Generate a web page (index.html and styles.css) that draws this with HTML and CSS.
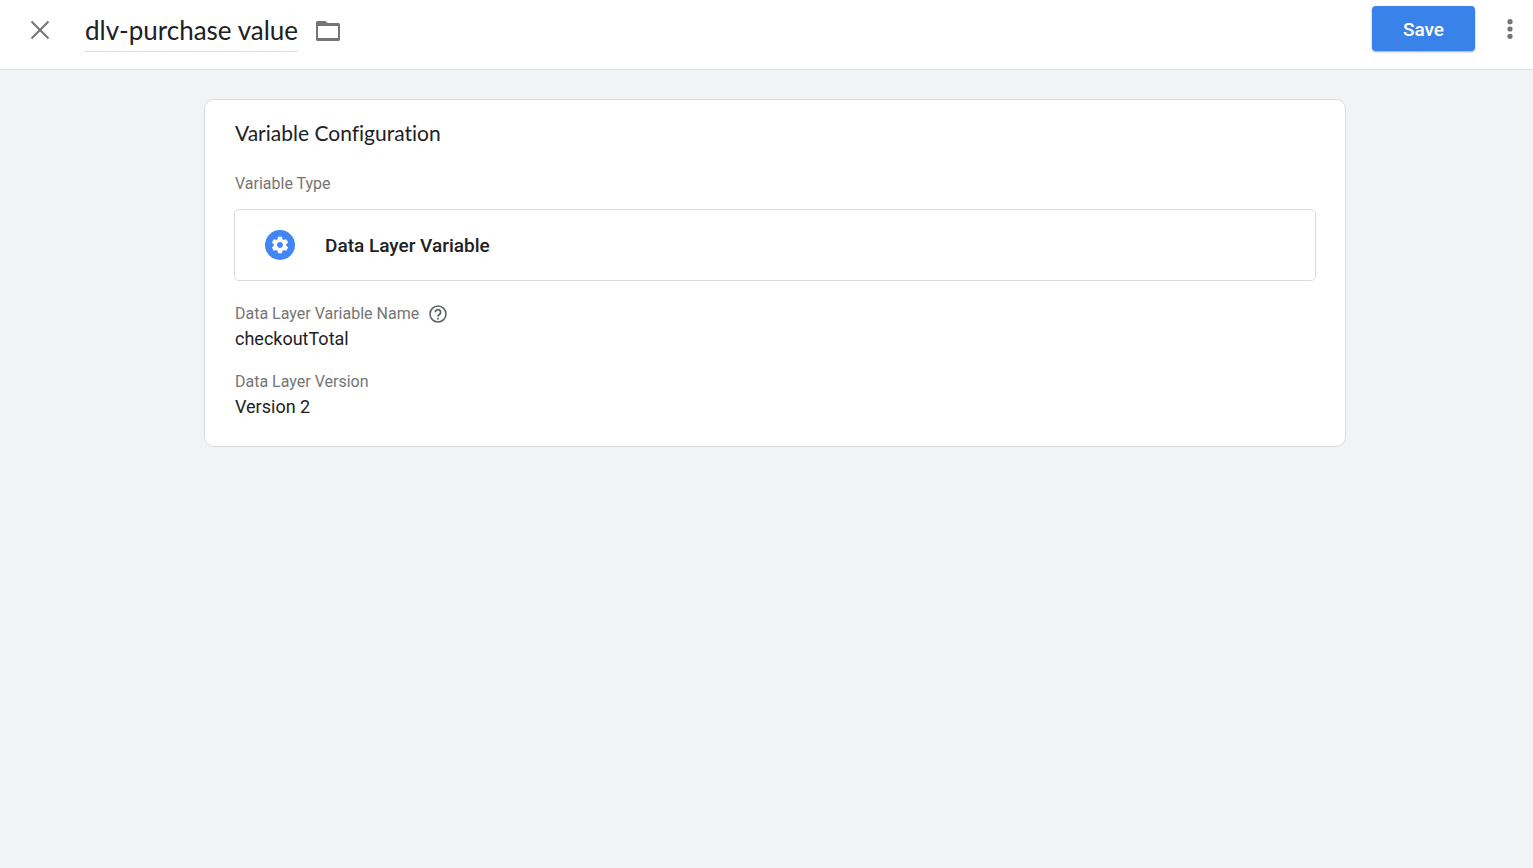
FILE: index.html
```
<!DOCTYPE html>
<html lang="en">
<head>
    <meta charset="UTF-8">
    <title>dlv-purchase value</title>
    <meta name="viewport" content="width=device-width, initial-scale=1.0">
    <link rel="stylesheet" href="styles.css">
</head>
<body>
    <header class="toolbar">
        <button class="icon-btn" type="button" aria-label="Close">
            <svg width="20" height="20" viewBox="0 0 20 20"><path d="M1.5 1.5l17 17M18.5 1.5l-17 17" fill="none" stroke="#757575" stroke-width="2"/></svg>
        </button>
        <input class="variable-name" type="text" value="dlv-purchase value" aria-label="Variable name">
        <button class="icon-btn" type="button" aria-label="Move to folder">
            <svg width="24" height="22" viewBox="0 0 24 22"><path d="M1.500 2H9.500l2.200 2H22.500a1.500 1.500 0 0 1 1.500 1.500v15a1.500 1.500 0 0 1-1.500 1.500H1.500a1.500 1.500 0 0 1-1.500-1.500v-17A1.500 1.500 0 0 1 1.500 2zM2 7v12h20V7z" fill="#757575" fill-rule="evenodd"/></svg>
        </button>
        <div class="toolbar-actions">
            <button class="save-btn" type="button">Save</button>
            <button class="icon-btn" type="button" aria-label="More actions">
                <svg width="6" height="22" viewBox="0 0 6 22" fill="#757575"><circle cx="3" cy="2.700" r="2.600"/><circle cx="3" cy="10" r="2.600"/><circle cx="3" cy="17.300" r="2.600"/></svg>
            </button>
        </div>
    </header>

    <main class="content">
        <section class="card">
            <h1 class="card-title">Variable Configuration</h1>
            <p class="label">Variable Type</p>
            <button class="type-box" type="button">
                <svg width="30" height="30" viewBox="0 0 30 30">
                    <circle cx="15" cy="15" r="15" fill="#4285f4"/>
                    <path transform="translate(5 5) scale(.8333)" d="M19.43 12.98c.04-.32.07-.64.07-.98s-.03-.66-.07-.98l2.11-1.65c.19-.15.24-.42.12-.64l-2-3.46c-.12-.22-.39-.3-.61-.22l-2.49 1c-.52-.4-1.08-.73-1.69-.98l-.38-2.65C14.46 2.18 14.25 2 14 2h-4c-.25 0-.46.18-.49.42l-.38 2.65c-.61.25-1.17.59-1.69.98l-2.49-1c-.23-.09-.49 0-.61.22l-2 3.46c-.13.22-.07.49.12.64l2.11 1.65c-.04.32-.07.65-.07.98s.03.66.07.98l-2.11 1.65c-.19.15-.24.42-.12.64l2 3.46c.12.22.39.3.61.22l2.49-1c.52.4 1.08.73 1.69.98l.38 2.65c.03.24.24.42.49.42h4c.25 0 .46-.18.49-.42l.38-2.65c.61-.25 1.17-.59 1.69-.98l2.49 1c.23.09.49 0 .61-.22l2-3.46c.12-.22.07-.49-.12-.64l-2.11-1.65zM12 15.5c-1.93 0-3.5-1.57-3.5-3.5s1.57-3.5 3.5-3.5 3.5 1.57 3.5 3.5-1.57 3.5-3.5 3.5z" fill="#fff"/>
                </svg>
                <span>Data Layer Variable</span>
            </button>
            <dl class="fields">
                <div class="field">
                    <dt class="label">
                        Data Layer Variable Name
                        <button class="icon-btn" type="button" aria-label="Help">
                            <svg width="18" height="18" viewBox="0 0 18 18"><circle cx="9" cy="9" r="8" fill="none" stroke="#5f6368" stroke-width="1.6"/><path d="M6.4 7.3a2.6 2.6 0 1 1 4.3 1.9C9.7 10 9 10.3 9 11.6" fill="none" stroke="#5f6368" stroke-width="1.8"/><path d="M8.1 12.7h1.8v1.8H8.1z" fill="#5f6368"/></svg>
                        </button>
                    </dt>
                    <dd class="value">checkoutTotal</dd>
                </div>
                <div class="field">
                    <dt class="label">Data Layer Version</dt>
                    <dd class="value">Version 2</dd>
                </div>
            </dl>
        </section>
    </main>
</body>
</html>
```
FILE: styles.css
```
* {
    margin: 0;
    padding: 0;
    box-sizing: border-box;
}

body {
    min-height: 100vh;
    background: #f1f3f4;
    color: #202124;
    font-family: Roboto, Arial, sans-serif;
}

button {
    border: 0;
    background: none;
    font-family: inherit;
    cursor: pointer;
}

svg {
    display: block;
}

.toolbar {
    display: flex;
    align-items: flex-start;
    height: 70px;
    padding: 6px 20px 0 30px;
    background: #fff;
    border-bottom: 1px solid #dadce0;
}

.toolbar .icon-btn {
    display: flex;
    align-items: center;
    height: 48px;
}

.variable-name {
    width: 213px;
    height: 46px;
    margin: 0 18px 0 35px;
    padding-top: 2px;
    border: 0;
    border-bottom: 1px solid #dadce0;
    outline: 0;
    color: #202124;
    font-family: Lato, Roboto, sans-serif;
    font-size: 26px;
}

.toolbar-actions {
    display: flex;
    gap: 32px;
    margin-left: auto;
}

.save-btn {
    min-width: 103px;
    height: 45px;
    padding-top: 2px;
    border-radius: 4px;
    background: #3882ea;
    box-shadow: 0 1px 2px rgba(0, 0, 0, 0.35);
    color: #fff;
    font-size: 19px;
    font-weight: 500;
}

.content {
    padding: 29px 187px 29px 204px;
}

.card {
    padding: 19px 29px 26px;
    background: #fff;
    border: 1px solid #dadce0;
    border-radius: 10px;
}

.card-title {
    padding-left: 1px;
    font-family: Lato, Roboto, sans-serif;
    font-size: 21px;
    font-variant-ligatures: none;
    font-weight: 400;
    line-height: 28px;
}

.label {
    display: flex;
    align-items: center;
    gap: 10px;
    padding-left: 1px;
    color: #757575;
    font-size: 16px;
    line-height: 24px;
}

.card-title + .label {
    margin-top: 25px;
}

.type-box {
    display: flex;
    align-items: center;
    gap: 30px;
    width: 100%;
    height: 72px;
    margin: 13px 0 21px;
    padding: 0 30px;
    border: 1px solid #dadce0;
    border-radius: 5px;
    color: #202124;
    font-size: 19px;
    font-weight: 500;
}

.fields {
    display: grid;
    gap: 18px;
}

.value {
    padding-left: 1px;
    font-size: 18px;
    line-height: 26px;
}
```
